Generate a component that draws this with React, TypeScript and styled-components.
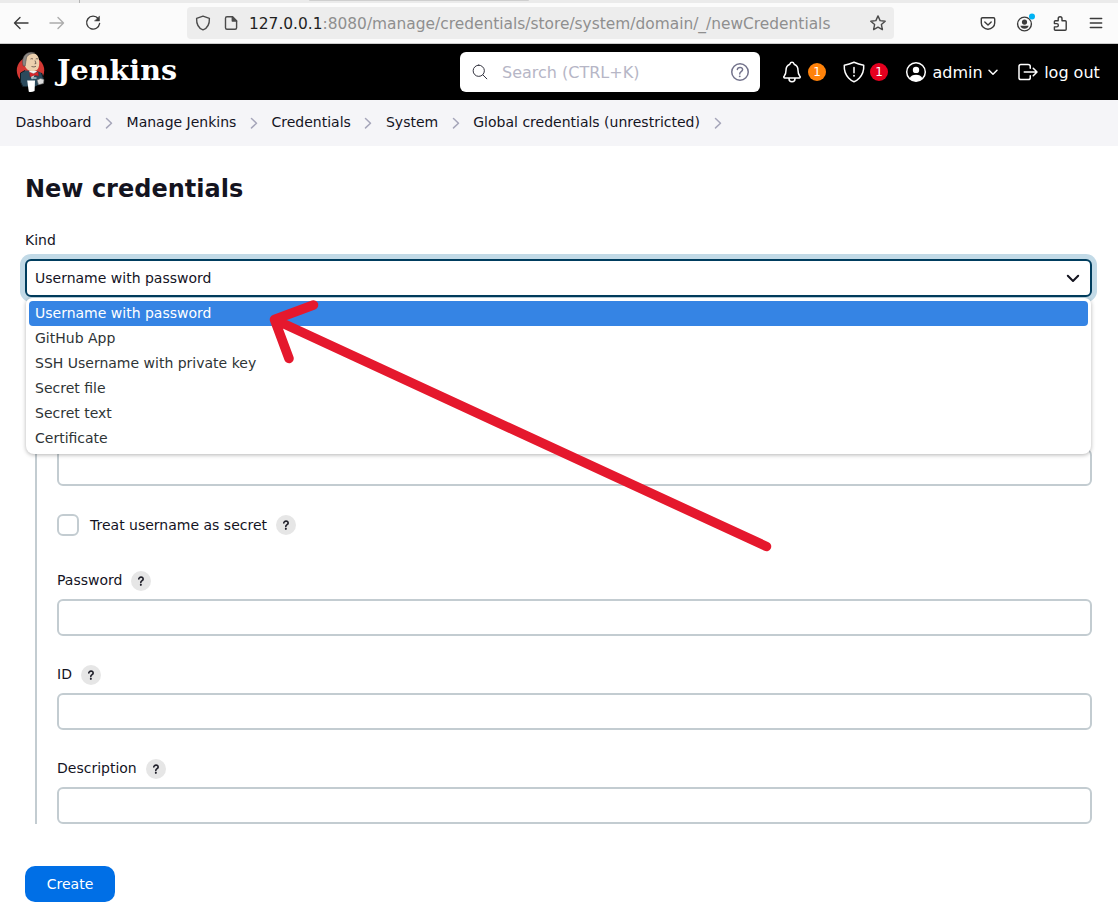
import React from "react";
import styled, { createGlobalStyle } from "styled-components";

const GlobalStyle = createGlobalStyle`
  *, *::before, *::after { box-sizing: border-box; }
  html, body { margin: 0; background: #fff; }
  body {
    font-family: "DejaVu Sans", sans-serif;
    font-size: 14px;
    color: #14141f;
    overflow: hidden;
  }
  svg { display: block; flex: none; }
`;

const Page = styled.div`
  position: relative;
  display: flex;
  flex-direction: column;
  width: 1118px;
  height: 920px;
  overflow: hidden;
`;

/* Browser chrome */
const TabStrip = styled.div`
  display: flex;
  height: 3px;
  flex: none;
  background: #ebebeb;
`;
const TabDivider = styled.div`
  width: 1px;
  height: 3px;
  margin-left: 79px;
  background: #b5b5b5;
`;
const ActiveTabEdge = styled.div`
  width: 220px;
  height: 1px;
  margin-left: 229px;
  background: #cfcfcf;
  border-radius: 0 0 4px 4px;
`;
const Toolbar = styled.div`
  display: flex;
  align-items: center;
  height: 41px;
  flex: none;
  background: #fbfbfb;
  border-bottom: 1px solid #cccccc;
`;
const NavButtons = styled.div`
  display: flex;
  gap: 20px;
  width: 187px;
  padding-left: 13px;
`;
const UrlBar = styled.div`
  display: flex;
  align-items: center;
  width: 707px;
  height: 32px;
  padding: 0 8px;
  border-radius: 4px;
  background: #ededed;
`;
const UrlText = styled.div`
  flex: 1;
  margin-left: 10px;
  padding-top: 1px;
  font-size: 15.42px;
  line-height: 20px;
  white-space: nowrap;
  color: #8f8f8f;
`;
const UrlHost = styled.span`
  color: #1f1f1f;
`;
const SiteIcons = styled.div`
  display: flex;
  gap: 12px;
`;
const BrowserActions = styled.div`
  display: flex;
  align-items: center;
  gap: 20px;
  margin-left: 86px;
  padding-top: 1px;
`;

/* Jenkins header */
const Header = styled.header`
  display: flex;
  align-items: center;
  height: 56px;
  flex: none;
  background: #000;
  color: #fff;
  font-size: 16px;
`;
const Brand = styled.div`
  display: flex;
  align-items: center;
  width: 460px;
  padding-left: 15px;
`;
const BrandName = styled.span`
  margin: -4px 0 0 12px;
  font: bold 28.6px/40px "DejaVu Serif", serif;
`;
const SearchBox = styled.div`
  display: flex;
  align-items: center;
  width: 300px;
  height: 40px;
  padding: 0 8px 0 12px;
  border-radius: 6px;
  background: #fff;
`;
const Placeholder = styled.span`
  flex: 1;
  margin-left: 14px;
  color: #b6b6c6;
`;
const HeaderItem = styled.div<{ $gap: number; $before: number }>`
  display: flex;
  align-items: center;
  gap: ${(p) => p.$gap}px;
  margin-left: ${(p) => p.$before}px;
  white-space: nowrap;
`;
const Badge = styled.span<{ $color: string }>`
  width: 18px;
  height: 18px;
  border-radius: 50%;
  background: ${(p) => p.$color};
  font-size: 12px;
  line-height: 19px;
  text-align: center;
`;

const Breadcrumbs = styled.nav`
  display: flex;
  align-items: center;
  height: 46px;
  flex: none;
  padding: 0 0 2px 15.5px;
  background: #f5f5f8;
`;
const Crumb = styled.span`
  display: flex;
  align-items: center;
  white-space: nowrap;
`;
const CrumbSeparator = styled.span`
  display: flex;
  justify-content: center;
  width: 35.1px;
  padding-top: 1px;
`;

/* Form */
const Main = styled.main`
  display: flex;
  flex-direction: column;
  align-items: flex-start;
  padding: 25px 26px 0 25px;
`;
const Title = styled.h1`
  margin: 0;
  font-size: 24px;
  line-height: 36px;
  font-weight: bold;
`;
const KindLabel = styled.label`
  margin-top: 23px;
  line-height: 20px;
`;
const SelectWrap = styled.div`
  position: relative;
  width: 1067px;
  margin-top: 9px;
`;
const Select = styled.div`
  display: flex;
  align-items: center;
  justify-content: space-between;
  height: 38px;
  padding: 0 10px 0 8px;
  border: 2px solid #003d5e;
  border-radius: 6px;
  background: #fff;
  box-shadow: 0 0 0 5px #c2dae7;
`;
const Menu = styled.ul`
  position: absolute;
  z-index: 1;
  top: 39px;
  left: 1px;
  right: 1px;
  margin: 0;
  padding: 3px 3px;
  list-style: none;
  border-radius: 6px 6px 8px 8px;
  background: #fff;
  box-shadow: 0 1px 4px rgba(0, 0, 0, 0.3);
`;
const Option = styled.li<{ $active?: boolean }>`
  height: 25px;
  padding-left: 6px;
  border-radius: 4px;
  line-height: 24px;
  background: ${(p) => (p.$active ? "#3584e4" : "transparent")};
  color: ${(p) => (p.$active ? "#fff" : "#2e3436")};
`;
const Section = styled.section`
  display: flex;
  flex-direction: column;
  width: 1057px;
  margin: 30px 0 0 10px;
  padding: 122px 0 0 20px;
  border-left: 2px solid #c3ccd1;
`;
const Input = styled.div`
  height: 37px;
  border: 2px solid #c3ccd1;
  border-radius: 6px;
  background: #fff;
`;
const CheckRow = styled.div`
  display: flex;
  align-items: center;
  height: 22px;
  margin: 28px 0 6px;
`;
const Checkbox = styled.span`
  width: 22px;
  height: 22px;
  margin-right: 11px;
  border: 2px solid #c3ccd1;
  border-radius: 6px;
`;
const Field = styled.div`
  display: flex;
  flex-direction: column;
  gap: 8px;
  margin-top: 29px;
`;
const FieldLabel = styled.div`
  display: flex;
  height: 20px;
  line-height: 19px;
`;
const HelpButton = styled.span`
  display: flex;
  width: 20px;
  height: 20px;
  margin-left: 9px;
  border-radius: 50%;
  background: #e6e6e6;
`;
const CreateButton = styled.button`
  width: 90px;
  height: 36px;
  margin-top: 42px;
  padding: 0;
  border: 0;
  border-radius: 10px;
  background: #006fe6;
  color: #fff;
  font: 14px "DejaVu Sans", sans-serif;
`;
const Annotation = styled.svg`
  position: absolute;
  z-index: 2;
  top: 290px;
  left: 260px;
  pointer-events: none;
`;

type IconProps = {
  size: number;
  box?: number;
  stroke?: number;
  color?: string;
  children: React.ReactNode;
};
const Icon = ({ size, box = 16, stroke = 1.4, color = "#3b3b3b", children }: IconProps) => (
  <svg
    width={size}
    height={size}
    viewBox={`0 0 ${box} ${box}`}
    fill="none"
    stroke={color}
    strokeWidth={stroke}
    strokeLinecap="round"
    strokeLinejoin="round"
  >
    {children}
  </svg>
);

const QuestionMark = () => (
  <path d="M200 202.29s.84-17.5 19.57-32.57C230.68 160.77 244 158.18 256 158c10.93-.14 20.69 1.67 26.53 4.45 10 4.76 29.47 16.38 29.47 41.09 0 26-17 37.81-36.37 50.8S251 281.43 251 296" />
);

const Help = () => (
  <HelpButton>
    <Icon size={20} box={512} stroke={42} color="#22222c">
      <QuestionMark />
      <circle cx="252" cy="354" r="27" fill="#22222c" stroke="none" />
    </Icon>
  </HelpButton>
);

const Butler = () => (
  <svg width="30" height="42" viewBox="0 0 30 42">
    <circle cx="15.500" cy="19.500" r="13.700" fill="#d33833" />
    <path d="M5.500 22 10 19.500l12 .5 5 2 1.500 5-1.500 5-7 3.500H7.500L5.500 31z" fill="#2b4a5c" />
    <path d="M5.500 22 10 19.500M5.500 22V31l2 4M26.500 22l1.800 5" stroke="#101a20" fill="none" />
    <path d="M14 19.500l3 9 5-8.500z" fill="#f4f4f4" />
    <path d="M9 11C8 6 11 2 16 1.800c5.500 0 8 3.700 8.200 8.700.2 3-.2 5.500-1.400 7.500-1.800 2.500-6.800 2.800-9.800 1C10.500 17.500 9.500 14.500 9 11z" fill="#ecd0ae" />
    <path d="M8.200 15C6 8 9.500 1.500 16 1.300c1.500 0 3 .3 4 .9-4 .2-7 1.300-8.300 3.800-.7 1.600-.2 3.200-.9 4.800l-.6 4.200z" fill="#8b8885" stroke="#45413f" strokeWidth=".5" />
    <path d="M15.500 8q1.500-.8 2.500 0M20.700 8q1.400-.8 2.300 0M20 9.500l1 3-1.400.3M16.500 15.500q2.700 1 4.500-.2" stroke="#5a4d45" strokeWidth=".8" fill="none" />
    <path d="M14.500 21.200l4 1.500 4.500-2.200.7 4.500-4.200-.7-4.500 1.700z" fill="#d9262d" stroke="#731d20" strokeWidth=".4" />
    <path d="M16.500 27h5" stroke="#a3bac4" strokeWidth="1.600" fill="none" />
    <path d="M12.200 29.500H20l-.4 10.500q-3 1.300-5.800.7z" fill="#fff" />
    <path d="M22 29l3.500-1.500 3.500 1-.5 4-5 1.300z" fill="#ddd" stroke="#666" strokeWidth=".6" />
  </svg>
);

const crumbs = ["Dashboard", "Manage Jenkins", "Credentials", "System", "Global credentials (unrestricted)"];
const kinds = ["Username with password", "GitHub App", "SSH Username with private key", "Secret file", "Secret text", "Certificate"];
const fields = ["Password", "ID", "Description"];

export default function App() {
  return (
    <>
      <GlobalStyle />
      <Page>
        <TabStrip>
          <TabDivider />
          <ActiveTabEdge />
        </TabStrip>
        <Toolbar>
          <NavButtons>
            <Icon size={16}><path d="M1.500 8H15M7 2.500 1.500 8 7 13.500" /></Icon>
            <Icon size={16} color="#acacac"><path d="M1 8h13.500M9 2.500 14.500 8 9 13.500" /></Icon>
            <Icon size={16}>
              <path d="M13.200 3.500A6.500 6.500 0 1 0 14.600 8.500" />
              <path d="M14.500 1.300V6H9.800z" fill="#3b3b3b" strokeWidth=".5" />
            </Icon>
          </NavButtons>
          <UrlBar>
            <SiteIcons>
              <Icon size={16} color="#4b4b4b"><path d="M8 1.100 14.400 3.400C14.600 9 12 13.300 8 14.900 4 13.300 1.400 9 1.600 3.400z" /></Icon>
              <Icon size={16} color="#4b4b4b">
                <path d="M4 1.700h5.500L13.600 6v6.700q0 1.500-1.500 1.500H4q-1.500 0-1.500-1.500V3.200Q2.500 1.700 4 1.700z" />
                <path d="M9.300 1.700V6h4.300z" fill="#4b4b4b" />
              </Icon>
            </SiteIcons>
            <UrlText>
              <UrlHost>127.0.0.1</UrlHost>:8080/manage/credentials/store/system/domain/_/newCredentials
            </UrlText>
            <Icon size={16} color="#4b4b4b"><path d="M8 .9l2.100 4.700 5.100.6-3.800 3.400 1 5L8 12.100l-4.400 2.500 1-5L.8 6.200l5.100-.6z" /></Icon>
          </UrlBar>
          <BrowserActions>
            <Icon size={16}>
              <path d="M2.500 1.700h11q1.200 0 1.200 1.200v4a6.700 6.300 0 0 1-13.400 0v-4Q1.300 1.700 2.500 1.700z" />
              <path d="M4.800 5.900 8 8.900l3.200-3" />
            </Icon>
            <svg width="16" height="20" viewBox="0 0 16 20" fill="#3b3b3b" overflow="visible">
              <circle cx="8.500" cy="10" r="6.900" fill="none" stroke="#3b3b3b" strokeWidth="1.400" />
              <circle cx="8.500" cy="8.100" r="2.600" />
              <path d="M4.300 11.700h8.400q-.9 3-4.200 3t-4.200-3z" />
              <circle cx="16" cy="2.500" r="3" fill="#00b3f4" />
            </svg>
            <Icon size={16}>
              <path d="M6.200 4.700V2.700a1.900 1.900 0 0 1 3.800 0v2h3.200q1 0 1 1v7.600q0 1-1 1H3.400q-1 0-1-1v-2.400h2.300a1.600 1.600 0 0 0 0-3.300H2.400V5.700q0-1 1-1z" />
            </Icon>
            <Icon size={16} stroke={1.4}><path d="M2.300 2.500h11.400M2.300 7h11.400M2.300 11.500h11.400" /></Icon>
          </BrowserActions>
        </Toolbar>

        <Header>
          <Brand>
            <Butler />
            <BrandName>Jenkins</BrandName>
          </Brand>
          <SearchBox>
            <Icon size={16} box={448} stroke={28} color="#33333f">
              <g transform="translate(-32 -32)">
                <path d="M221.090 64a157.090 157.090 0 1 0 157.090 157.090A157.100 157.100 0 0 0 221.090 64zM338.290 338.290L448 448" />
              </g>
            </Icon>
            <Placeholder>Search (CTRL+K)</Placeholder>
            <Icon size={24} box={512} stroke={32} color="#73738c">
              <circle cx="256" cy="256" r="176" />
              <QuestionMark />
              <circle cx="250" cy="348" r="20" fill="#73738c" stroke="none" />
            </Icon>
          </SearchBox>
          <HeaderItem $before={20} $gap={4}>
            <Icon size={24} box={512} stroke={32} color="#fff">
              <path d="M427.680 351.430C402 320 383.870 304 383.870 217.350 383.870 138 343.350 109.730 310 96c-4.430-1.820-8.600-6-9.950-10.550C294.200 65.540 277.800 48 256 48s-38.210 17.550-44 37.470c-1.350 4.600-5.520 8.710-9.950 10.530-33.390 13.750-73.870 41.920-73.870 121.350C128.130 304 110 320 84.320 351.430 73.680 364.450 83 384 101.610 384h308.880c18.510 0 27.770-19.610 17.190-32.570zM320 384v16a64 64 0 0 1-128 0v-16" />
            </Icon>
            <Badge $color="#ff820a">1</Badge>
          </HeaderItem>
          <HeaderItem $before={16} $gap={4}>
            <Icon size={24} box={512} stroke={32} color="#fff">
              <path d="M463.100 112.370C373.680 96.330 336.710 84.450 256 48c-80.710 36.450-117.680 48.330-207.100 64.370C32.700 369.130 240.580 457.790 256 464c15.420-6.210 223.300-94.870 207.100-351.630zM256 160v112" />
              <circle cx="256" cy="336" r="20" fill="#fff" stroke="none" />
            </Icon>
            <Badge $color="#e6001f">1</Badge>
          </HeaderItem>
          <HeaderItem $before={16} $gap={4.5}>
            <Icon size={24} box={24} stroke={1.5} color="#fff">
              <circle cx="12" cy="12" r="9.300" />
              <circle cx="12" cy="9.900" r="3.200" fill="#fff" stroke="none" />
              <path d="M5.500 18.300c1.200-2.500 3.500-3.600 6.500-3.600s5.300 1.100 6.500 3.600c-1.500 1.800-4 3-6.500 3s-5-1.200-6.500-3z" fill="#fff" stroke="none" />
            </Icon>
            <span>admin</span>
            <Icon size={12} box={12} stroke={1.5} color="#fff"><path d="M2 4.200l4 4 4-4" /></Icon>
          </HeaderItem>
          <HeaderItem $before={16.5} $gap={4.5}>
            <Icon size={24} box={512} stroke={32} color="#fff">
              <path d="M304 336v40a40 40 0 0 1-40 40H104a40 40 0 0 1-40-40V136a40 40 0 0 1 40-40h152c22.090 0 48 17.910 48 40v40M368 336l80-80-80-80M176 256h256" />
            </Icon>
            <span>log out</span>
          </HeaderItem>
        </Header>

        <Breadcrumbs>
          {crumbs.map((c) => (
            <Crumb key={c}>
              {c}
              <CrumbSeparator>
                <Icon size={12} box={12} stroke={1.5} color="#a6a6ba"><path d="M3.500 1.500 8.500 6.200l-5 4.700" /></Icon>
              </CrumbSeparator>
            </Crumb>
          ))}
        </Breadcrumbs>

        <Main>
          <Title>New credentials</Title>
          <KindLabel>Kind</KindLabel>
          <SelectWrap>
            <Select>
              <span>{kinds[0]}</span>
              <Icon size={14} box={14} stroke={2} color="#14141f"><path d="M1.800 4.800 7 10l5.200-5.200" /></Icon>
            </Select>
            <Menu>
              {kinds.map((k, i) => (
                <Option key={k} $active={i === 0}>{k}</Option>
              ))}
            </Menu>
          </SelectWrap>
          <Section>
            <Input />
            <CheckRow>
              <Checkbox />
              Treat username as secret
              <Help />
            </CheckRow>
            {fields.map((f) => (
              <Field key={f}>
                <FieldLabel>
                  {f}
                  <Help />
                </FieldLabel>
                <Input />
              </Field>
            ))}
          </Section>
          <CreateButton>Create</CreateButton>
        </Main>

        <Annotation width="520" height="270" viewBox="260 290 520 270" fill="none" stroke="#e5182d" strokeWidth="9.500" strokeLinecap="round" strokeLinejoin="round">
          <path d="M766.500 546.500 274.500 319.500M313.500 305 274.500 319.500l14.500 39" />
        </Annotation>
      </Page>
    </>
  );
}
